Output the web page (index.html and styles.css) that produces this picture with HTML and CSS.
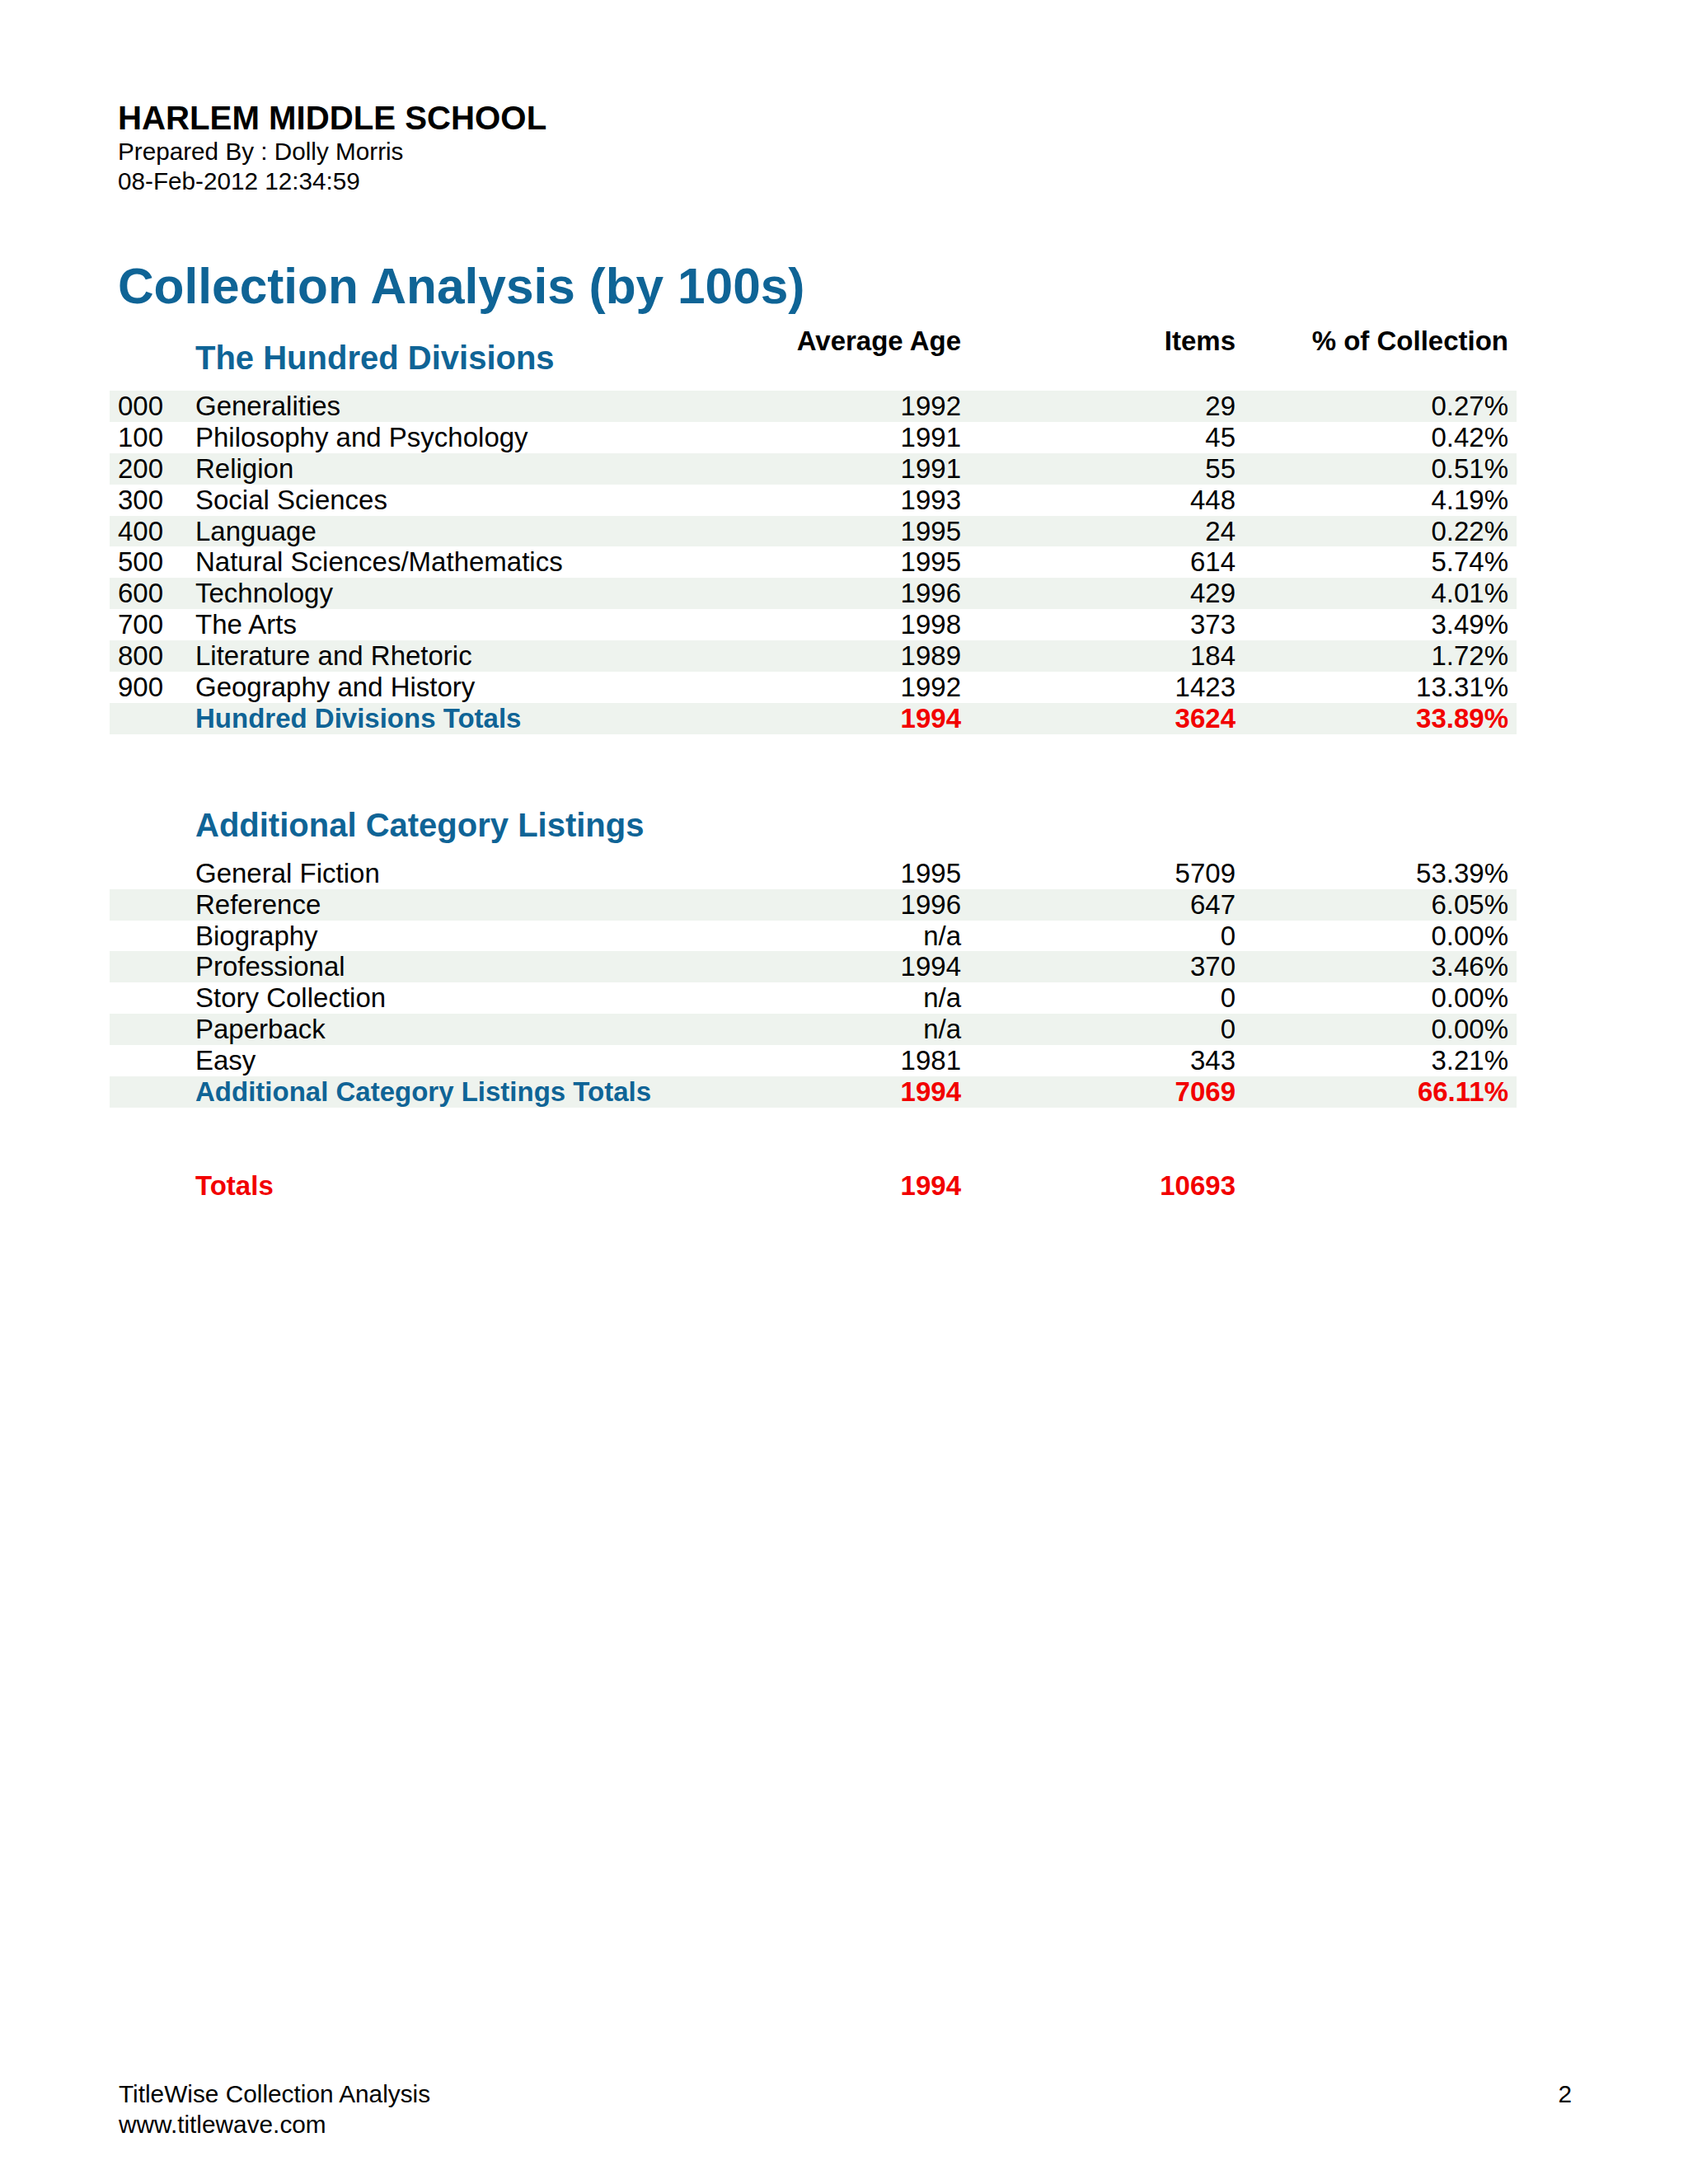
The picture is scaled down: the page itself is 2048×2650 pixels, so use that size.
FILE: index.html
```html
<!DOCTYPE html>
<html lang="en">
<head>
<meta charset="utf-8">
<title>Collection Analysis (by 100s)</title>
<link rel="stylesheet" href="styles.css">
</head>
<body>
<div class="page">
  <header class="doc-head">
    <div class="school">HARLEM MIDDLE SCHOOL</div>
    <div class="meta">Prepared By : Dolly Morris</div>
    <div class="meta">08-Feb-2012 12:34:59</div>
  </header>

  <h1 class="title">Collection Analysis (by 100s)</h1>

  <section class="sec sec-first">
    <div class="row head">
      <div class="code"></div>
      <div class="name sec-title">The Hundred Divisions</div>
      <div class="num colh">Average Age</div>
      <div class="num colh">Items</div>
      <div class="num colh">% of Collection</div>
    </div>
    <div class="row band"><div class="code">000</div><div class="name">Generalities</div><div class="num">1992</div><div class="num">29</div><div class="num">0.27%</div></div>
    <div class="row"><div class="code">100</div><div class="name">Philosophy and Psychology</div><div class="num">1991</div><div class="num">45</div><div class="num">0.42%</div></div>
    <div class="row band"><div class="code">200</div><div class="name">Religion</div><div class="num">1991</div><div class="num">55</div><div class="num">0.51%</div></div>
    <div class="row"><div class="code">300</div><div class="name">Social Sciences</div><div class="num">1993</div><div class="num">448</div><div class="num">4.19%</div></div>
    <div class="row band"><div class="code">400</div><div class="name">Language</div><div class="num">1995</div><div class="num">24</div><div class="num">0.22%</div></div>
    <div class="row"><div class="code">500</div><div class="name">Natural Sciences/Mathematics</div><div class="num">1995</div><div class="num">614</div><div class="num">5.74%</div></div>
    <div class="row band"><div class="code">600</div><div class="name">Technology</div><div class="num">1996</div><div class="num">429</div><div class="num">4.01%</div></div>
    <div class="row"><div class="code">700</div><div class="name">The Arts</div><div class="num">1998</div><div class="num">373</div><div class="num">3.49%</div></div>
    <div class="row band"><div class="code">800</div><div class="name">Literature and Rhetoric</div><div class="num">1989</div><div class="num">184</div><div class="num">1.72%</div></div>
    <div class="row"><div class="code">900</div><div class="name">Geography and History</div><div class="num">1992</div><div class="num">1423</div><div class="num">13.31%</div></div>
    <div class="row band total"><div class="code"></div><div class="name">Hundred Divisions Totals</div><div class="num">1994</div><div class="num">3624</div><div class="num">33.89%</div></div>
  </section>

  <section class="sec sec-second">
    <div class="row head">
      <div class="code"></div>
      <div class="name sec-title">Additional Category Listings</div>
    </div>
    <div class="row"><div class="code"></div><div class="name">General Fiction</div><div class="num">1995</div><div class="num">5709</div><div class="num">53.39%</div></div>
    <div class="row band"><div class="code"></div><div class="name">Reference</div><div class="num">1996</div><div class="num">647</div><div class="num">6.05%</div></div>
    <div class="row"><div class="code"></div><div class="name">Biography</div><div class="num">n/a</div><div class="num">0</div><div class="num">0.00%</div></div>
    <div class="row band"><div class="code"></div><div class="name">Professional</div><div class="num">1994</div><div class="num">370</div><div class="num">3.46%</div></div>
    <div class="row"><div class="code"></div><div class="name">Story Collection</div><div class="num">n/a</div><div class="num">0</div><div class="num">0.00%</div></div>
    <div class="row band"><div class="code"></div><div class="name">Paperback</div><div class="num">n/a</div><div class="num">0</div><div class="num">0.00%</div></div>
    <div class="row"><div class="code"></div><div class="name">Easy</div><div class="num">1981</div><div class="num">343</div><div class="num">3.21%</div></div>
    <div class="row band total"><div class="code"></div><div class="name">Additional Category Listings Totals</div><div class="num">1994</div><div class="num">7069</div><div class="num">66.11%</div></div>
  </section>

  <section class="sec sec-grand">
    <div class="row grand"><div class="code"></div><div class="name">Totals</div><div class="num">1994</div><div class="num">10693</div><div class="num"></div></div>
  </section>

  <footer class="doc-foot">
    <div class="foot-left">
      <div>TitleWise Collection Analysis</div>
      <div>www.titlewave.com</div>
    </div>
    <div class="page-no">2</div>
  </footer>
</div>
</body>
</html>
```

FILE: styles.css
```css
html, body {
  margin: 0;
  padding: 0;
  background: #ffffff;
}

.page {
  width: 2048px;
  min-height: 2650px;
  box-sizing: border-box;
  padding: 122px 0 54px 0;
  display: flex;
  flex-direction: column;
  font-family: "Liberation Sans", Arial, Helvetica, sans-serif;
  color: #000000;
}

.doc-head {
  padding-left: 143px;
}

.school {
  font-size: 40.2px;
  font-weight: bold;
  line-height: 44px;
}

.meta {
  font-size: 29.7px;
  line-height: 36px;
}

.title {
  margin: 74px 0 0 0;
  padding-left: 143px;
  font-size: 60.4px;
  line-height: 70px;
  font-weight: bold;
  color: #0f6496;
}

.sec {
  margin-left: 133px;
  width: 1707px;
}

.sec-second {
  margin-top: 58px;
}

.sec-grand {
  margin-top: 76px;
}

.row {
  display: grid;
  grid-template-columns: 104px 729px 200px 333px 331px;
  padding-right: 10px;
  font-size: 33px;
  line-height: 37.9px;
  height: 37.9px;
  white-space: nowrap;
}

.row.head {
  height: auto;
  align-items: start;
  padding-bottom: 17px;
}

.band {
  background: #eef3ee;
}

.code {
  padding-left: 10px;
}

.num {
  text-align: right;
}

.sec-title {
  margin-top: 29px;
  font-size: 40px;
  line-height: 46px;
  font-weight: bold;
  color: #0f6496;
}

.colh {
  margin-top: 12.6px;
  font-size: 33px;
  line-height: 38px;
  font-weight: bold;
}

.total,
.grand {
  font-weight: bold;
}

.total .name {
  color: #0f6496;
}

.total .num,
.grand .name,
.grand .num {
  color: #f20000;
}

.doc-foot {
  margin-top: auto;
  display: flex;
  justify-content: space-between;
  align-items: flex-start;
  padding: 0 141px 0 144px;
  font-size: 29.8px;
  line-height: 37px;
}
```
